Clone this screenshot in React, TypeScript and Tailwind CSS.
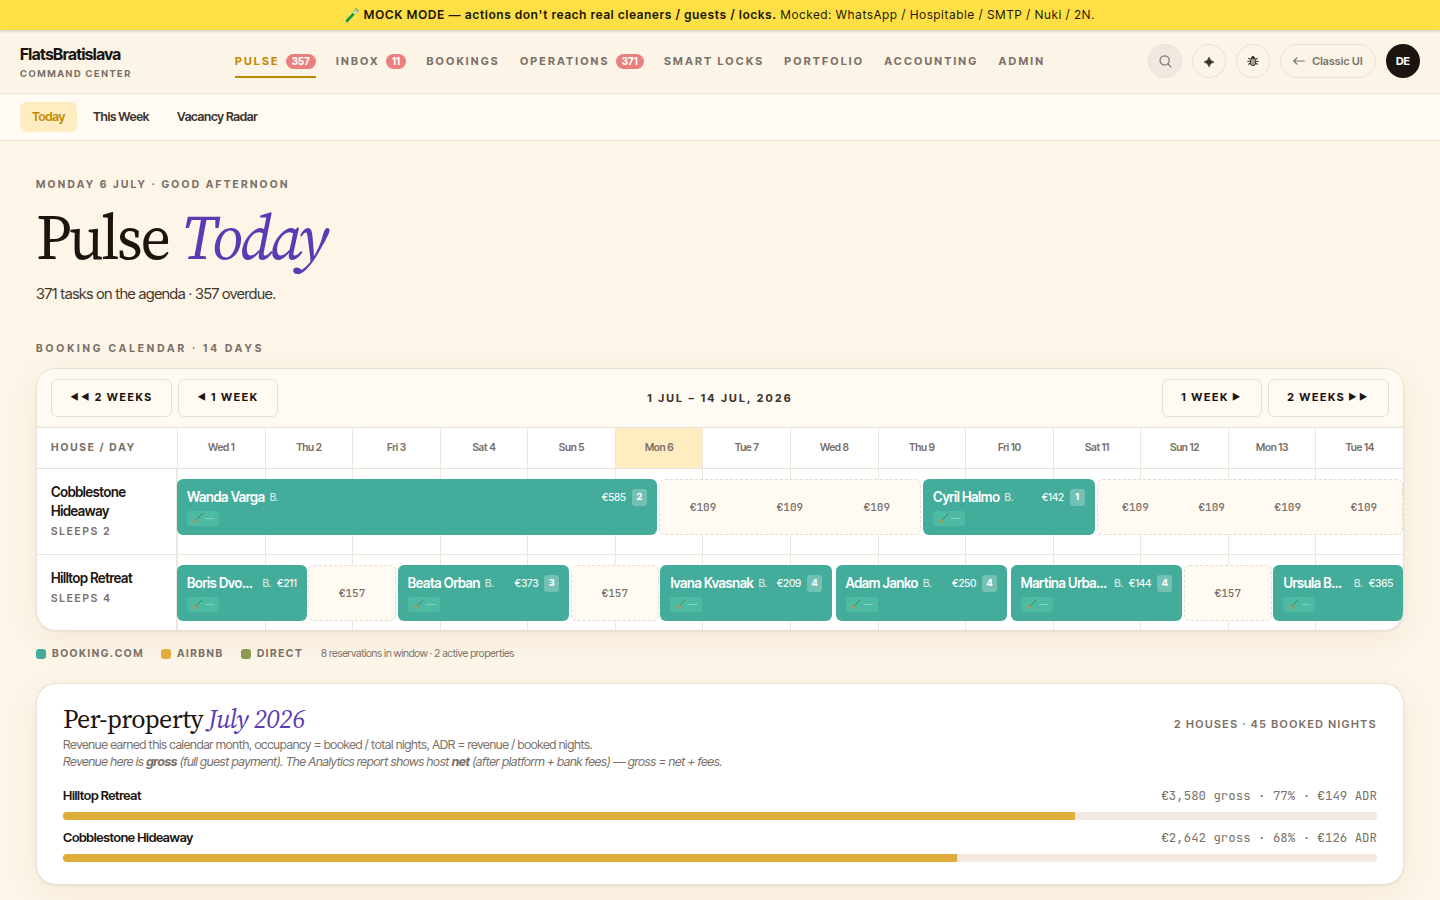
import React from 'react';
import clsx from 'clsx';

interface NavItem {
  label: string;
  count?: number;
  active?: boolean;
}

interface Booking {
  kind: 'booking';
  start: number;
  end: number;
  guest: string;
  price: string;
  guests?: number;
}

interface Gap {
  kind: 'gap';
  start: number;
  end: number;
  prices: string[];
}

interface House {
  name: string;
  sleeps: string;
  items: (Booking | Gap)[];
}

const NAV: NavItem[] = [
  { label: 'Pulse', count: 357, active: true },
  { label: 'Inbox', count: 11 },
  { label: 'Bookings' },
  { label: 'Operations', count: 371 },
  { label: 'Smart Locks' },
  { label: 'Portfolio' },
  { label: 'Accounting' },
  { label: 'Admin' },
];

const DAYS = ['Wed 1', 'Thu 2', 'Fri 3', 'Sat 4', 'Sun 5', 'Mon 6', 'Tue 7', 'Wed 8', 'Thu 9', 'Fri 10', 'Sat 11', 'Sun 12', 'Mon 13', 'Tue 14'];

// start / end are counted in half days from the left edge of the window
const HOUSES: House[] = [
  {
    name: 'Cobblestone Hideaway',
    sleeps: 'Sleeps 2',
    items: [
      { kind: 'booking', start: 0, end: 11, guest: 'Wanda Varga', price: '€585', guests: 2 },
      { kind: 'gap', start: 11, end: 17, prices: ['€109', '€109', '€109'] },
      { kind: 'booking', start: 17, end: 21, guest: 'Cyril Halmo', price: '€142', guests: 1 },
      { kind: 'gap', start: 21, end: 28, prices: ['€109', '€109', '€109', '€109'] },
    ],
  },
  {
    name: 'Hilltop Retreat',
    sleeps: 'Sleeps 4',
    items: [
      { kind: 'booking', start: 0, end: 3, guest: 'Boris Dvo…', price: '€211' },
      { kind: 'gap', start: 3, end: 5, prices: ['€157'] },
      { kind: 'booking', start: 5, end: 9, guest: 'Beata Orban', price: '€373', guests: 3 },
      { kind: 'gap', start: 9, end: 11, prices: ['€157'] },
      { kind: 'booking', start: 11, end: 15, guest: 'Ivana Kvasnak', price: '€209', guests: 4 },
      { kind: 'booking', start: 15, end: 19, guest: 'Adam Janko', price: '€250', guests: 4 },
      { kind: 'booking', start: 19, end: 23, guest: 'Martina Urba…', price: '€144', guests: 4 },
      { kind: 'gap', start: 23, end: 25, prices: ['€157'] },
      { kind: 'booking', start: 25, end: 28, guest: 'Ursula B…', price: '€365' },
    ],
  },
];

const REVENUE = [
  { name: 'Hilltop Retreat', stats: '€3,580 gross · 77% · €149 ADR', share: 77 },
  { name: 'Cobblestone Hideaway', stats: '€2,642 gross · 68% · €126 ADR', share: 68 },
];

const TubeIcon = () => (
  <svg width="15" height="16" viewBox="0 0 15 16" className="mr-1">
    <path d="M2 13.9L11.8 3.2" stroke="#86b58c" strokeWidth="3" strokeLinecap="round" />
    <path d="M2.1 13.8L8.4 7" stroke="#0f9a35" strokeWidth="2.4" strokeLinecap="round" />
    <path d="M8.6 6.8l2.8-3" stroke="#d9ecc9" strokeWidth="1.9" />
    <path d="M10.2 1.6l3.2 3" stroke="#9aa59c" strokeWidth="1.1" strokeLinecap="round" />
  </svg>
);

const BroomIcon = () => (
  <svg width="11" height="11" viewBox="0 0 11 11">
    <path d="M10.4.6L4.6 6.6" stroke="#4f7a5e" strokeWidth="0.9" strokeLinecap="round" />
    <path d="M4.2 5.6l1.6 1.6-1 2.2-2.6 1.2L.5 8.9l1.3-2.2z" fill="#93a566" />
    <path d="M3.6 6l1.7 1.7" stroke="#5c8a5c" strokeWidth="0.8" />
  </svg>
);

const SparkIcon = () => (
  <svg width="10" height="10" viewBox="0 0 10 10" className="mt-0.5" fill="#3d332b">
    <path d="M5 0Q5.9 4.1 10 5 5.9 5.9 5 10 4.1 5.9 0 5 4.1 4.1 5 0z" stroke="#3d332b" strokeWidth="0.6" />
  </svg>
);

const BugIcon = () => (
  <svg width="12" height="12" viewBox="0 0 12 12" fill="none" stroke="#3d332b" strokeWidth="1" strokeLinecap="round">
    <path d="M3.4 4H1.8V3.2M8.6 4h1.6V3.2M3.2 6.4H.7M8.8 6.4h2.5M3.4 8.6H1.8v.9M8.6 8.6h1.6v.9" />
    <rect x="3.5" y="2.8" width="5" height="7.8" rx="2.5" fill="#a89f96" />
    <path d="M4.5 2.9a1.5 1.5 0 0 1 3 0z" fill="#3d332b" />
  </svg>
);

const Header = () => (
  <header className="flex h-16 items-center border-b border-[#ece6da] bg-[#fcf4e6] px-5 pb-px">
    <div className="w-[215px] shrink-0 pt-0.5">
      <div className="text-[16px] leading-5 font-bold tracking-[-0.03em] text-[#1c140e]">FlatsBratislava</div>
      <div className="mt-1 text-[9.5px] leading-3 font-bold tracking-[0.17em] text-[#7a7068] uppercase">Command Center</div>
    </div>
    <nav className="flex gap-5">
      {NAV.map((item) => (
        <a
          key={item.label}
          className={clsx(
            'flex h-[34px] items-center gap-1.5 border-b-2 pt-[3px] text-[11px] font-bold tracking-[0.2em] whitespace-nowrap uppercase',
            item.active ? 'border-[#c08a00] text-[#c08a00]' : 'border-transparent text-[#7a7068]'
          )}
        >
          {item.label}
          {item.count && (
            <span className="flex h-[15px] items-center rounded-full bg-[#eb7f7d] px-[6.3px] text-[10px] font-bold tracking-normal text-white">
              {item.count}
            </span>
          )}
        </a>
      ))}
    </nav>
    <div className="ml-auto flex items-center gap-2.5 text-[#3d332b]">
      <button className="flex size-[34px] items-center justify-center rounded-full border border-[#e8e0d6] bg-[#f1e8e2]">
        <svg width="13" height="13" viewBox="0 0 13 13" fill="none" stroke="#7a7068" strokeWidth="1.2" strokeLinecap="round">
          <circle cx="5.6" cy="5.4" r="4.6" />
          <path d="M9 8.8l2.8 3" />
        </svg>
      </button>
      <button className="flex size-[34px] items-center justify-center rounded-full border border-[#e8e0d6]">
        <SparkIcon />
      </button>
      <button className="flex size-[34px] items-center justify-center rounded-full border border-[#e8e0d6]">
        <BugIcon />
      </button>
      <button className="flex h-[34px] w-24 items-center justify-center gap-[7px] rounded-full border border-[#e8e0d6] text-[11px] font-semibold tracking-[0.02em] text-[#7a7068]">
        <svg width="12" height="8" viewBox="0 0 12 8" fill="none" stroke="#7a7068" strokeWidth="1.2" strokeLinecap="round" strokeLinejoin="round">
          <path d="M11.3 4H.8M4 .8L.8 4 4 7.2" />
        </svg>
        <span>Classic UI</span>
      </button>
      <div className="flex size-[34px] items-center justify-center rounded-full bg-[#1c140e] text-[11px] font-bold tracking-normal text-white">DE</div>
    </div>
  </header>
);

const BookingBar: React.FC<{ item: Booking }> = ({ item }) => (
  <div
    className={clsx(
      'h-14 min-w-0 rounded-md bg-[#44ac9b] px-2.5 pt-2 text-white',
      item.start > 0 && 'ml-[1.75px]',
      item.end < 28 && 'mr-[1.75px]'
    )}
    style={{ gridColumn: `${item.start + 1} / ${item.end + 1}` }}
  >
    <div className="flex h-5 items-center whitespace-nowrap">
      <span className={clsx('text-[13.5px] font-semibold', item.guest.endsWith('…') && 'grow')}>{item.guest}</span>
      <span className="ml-[5px] pt-px text-[10.5px] font-medium text-white/75">B.</span>
      <span className="ml-auto pt-px pl-1.5 text-[10.5px] font-medium tracking-[-0.2px] text-white/95">{item.price}</span>
      {item.guests && (
        <span className="ml-1.5 flex h-[17px] w-[15px] shrink-0 items-center justify-center rounded-[3px] bg-white/25 text-[9.5px] font-bold tracking-normal">
          {item.guests}
        </span>
      )}
    </div>
    <div className="mt-1 flex h-[15px] w-8 items-center justify-center gap-0.5 rounded-[3px] bg-[#4dbaa3] text-[9.5px]">
      <BroomIcon />
      <span className="text-white/55">—</span>
    </div>
  </div>
);

const GapBar: React.FC<{ item: Gap }> = ({ item }) => (
  <div
    className="flex h-14 items-center justify-around rounded-md border border-dashed border-[#e6ddd2] bg-[#fffaf2] font-['JetBrains_Mono','DejaVu_Sans_Mono',monospace] text-[11px] font-medium tracking-normal text-[#7a7068]"
    style={{ gridColumn: `${item.start + 1} / ${item.end + 1}` }}
  >
    {item.prices.map((price, i) => (
      <span key={i}>{price}</span>
    ))}
  </div>
);

const StepButton: React.FC<{ children: React.ReactNode; wide?: boolean }> = ({ children, wide }) => (
  <button
    className={clsx(
      'flex h-[38px] items-center justify-center gap-[3px] rounded-md border border-[#e6e0d6] bg-[#fffaf2] pb-0.5 text-[11px] font-bold tracking-[0.15em] whitespace-nowrap text-[#1c140e] uppercase',
      wide ? 'w-[121px]' : 'w-[100px]'
    )}
  >
    {children}
  </button>
);

const Arrows: React.FC<{ children: string }> = ({ children }) => <span className="text-[9px] tracking-[2.4px]">{children}</span>;

const Calendar = () => (
  <div className="overflow-hidden rounded-[20px] border border-[#e6e0d6] bg-white shadow-[0_1px_2px_rgba(60,40,10,0.06),0_8px_32px_rgba(60,40,10,0.06)]">
    <div className="flex h-[59px] items-center justify-between border-b border-[#e6e0d6] bg-[#fffaf2] px-3.5">
      <div className="flex gap-1.5">
        <StepButton wide>
          <Arrows>◀◀</Arrows> 2 weeks
        </StepButton>
        <StepButton>
          <Arrows>◀</Arrows> 1 week
        </StepButton>
      </div>
      <div className="text-[11px] font-bold tracking-[0.2em] text-[#3d332b] uppercase">1 Jul – 14 Jul, 2026</div>
      <div className="flex gap-1.5">
        <StepButton>
          1 week <Arrows>▶</Arrows>
        </StepButton>
        <StepButton wide>
          2 weeks <Arrows>▶▶</Arrows>
        </StepButton>
      </div>
    </div>
    <div className="flex h-[41px] border-b border-[#e8e0d6]">
      <div className="flex w-[140px] shrink-0 items-center pl-3.5 text-[10.5px] font-bold tracking-[0.18em] text-[#7a7068] uppercase">House / Day</div>
      <div className="grid grow grid-cols-14">
        {DAYS.map((day) => (
          <div
            key={day}
            className={clsx(
              'flex items-center justify-center border-l border-[#efe7de] text-[10.5px] font-semibold text-[#7a7068]',
              day === 'Mon 6' && 'bg-[#ffecc0]'
            )}
          >
            {day}
          </div>
        ))}
      </div>
    </div>
    {HOUSES.map((house, i) => (
      <div key={house.name} className={clsx('flex', i === 0 ? 'h-[86px] border-b border-[#efe7de]' : 'h-[75px]')}>
        <div className="w-[140px] shrink-0 border-r border-[#efe7de] pt-3.5 pr-6 pl-3.5">
          <div className="text-[13.5px] leading-[1.41] font-semibold text-[#1c140e]">{house.name}</div>
          <div className="mt-0.5 text-[10.5px] leading-[18px] font-semibold tracking-[0.18em] text-[#7a7068] uppercase">{house.sleeps}</div>
        </div>
        <div className="grid grow">
          <div className="col-start-1 row-start-1 grid grid-cols-14">
            {DAYS.map((day) => (
              <div key={day} className="border-l border-[#efe7de]" />
            ))}
          </div>
          <div className="z-10 col-start-1 row-start-1 grid grid-cols-28 pt-2.5">
            {house.items.map((item) =>
              item.kind === 'booking' ? <BookingBar key={item.start} item={item} /> : <GapBar key={item.start} item={item} />
            )}
          </div>
        </div>
      </div>
    ))}
  </div>
);

const Legend = () => (
  <div className="mt-3.5 flex h-[18px] items-center text-[10.5px] font-bold tracking-[0.15em] text-[#7a7068] uppercase">
    <span className="mr-1.5 size-2.5 rounded-[3px] bg-[#44ac9b]" />
    <span className="w-[109px]">Booking.com</span>
    <span className="mr-1.5 size-2.5 rounded-[3px] bg-[#e0ad3b]" />
    <span className="w-16">Airbnb</span>
    <span className="mr-1.5 size-2.5 rounded-[3px] bg-[#8a9a50]" />
    <span className="w-16">Direct</span>
    <span className="text-[10.5px] font-normal tracking-[-0.02em] normal-case">8 reservations in window · 2 active properties</span>
  </div>
);

const PropertyCard = () => (
  <section className="mt-5 h-[202px] rounded-[20px] border border-[#e6e0d6] bg-white px-[26px] pt-[18px] shadow-[0_1px_2px_rgba(60,40,10,0.06),0_8px_32px_rgba(60,40,10,0.06)]">
    <div className="flex justify-between">
      <div>
        <h2 className="font-['Source_Serif_4','Liberation_Serif',serif] text-[26px] leading-[34px] tracking-[-0.026em] text-[#1c140e]">
          Per-property <em className="tracking-[-0.02em] text-[#5b3ab4]">July 2026</em>
        </h2>
        <p className="text-[12.5px] leading-[17px] text-[#7a7068]">
          Revenue earned this calendar month, occupancy = booked / total nights, ADR = revenue / booked nights.
        </p>
        <p className="text-[12.5px] leading-[17px] text-[#7a7068] italic">
          Revenue here is <b>gross</b> (full guest payment). The Analytics report shows host <b>net</b> (after platform + bank fees) — gross = net + fees.
        </p>
      </div>
      <div className="pt-3.5 text-[11px] leading-4 font-semibold tracking-[0.14em] text-[#7a7068] uppercase">2 houses · 45 booked nights</div>
    </div>
    <div className="mt-[17px] flex flex-col gap-[9px]">
      {REVENUE.map((row) => (
        <div key={row.name}>
          <div className="flex h-[18px] items-center justify-between">
            <span className="text-[13px] font-semibold text-[#1c140e]">{row.name}</span>
            <span className="font-['JetBrains_Mono','DejaVu_Sans_Mono',monospace] text-[12.4px] tracking-normal text-[#7a7068]">{row.stats}</span>
          </div>
          <div className="mt-[7px] h-2 overflow-hidden rounded bg-[#f1e8e2]">
            <div className="h-full bg-[#e0ad3b]" style={{ width: `${row.share}%` }} />
          </div>
        </div>
      ))}
    </div>
  </section>
);

const App: React.FC = () => (
  <div className="h-[900px] overflow-hidden bg-[#fdf5e7] font-['Inter_Tight',Inter,sans-serif] tracking-[-0.3px]">
    <div className="relative z-10 flex h-[30px] items-center justify-center bg-[#fee046] text-xs tracking-[0.98px] text-[#1a1400] shadow-[0_1px_3px_rgba(0,0,0,0.2)]">
      <TubeIcon />
      <span className="whitespace-pre">
        <b className="font-semibold">MOCK MODE — actions don't reach real cleaners / guests / locks.</b> Mocked: WhatsApp / Hospitable / SMTP / Nuki / 2N.
      </span>
    </div>
    <Header />
    <div className="flex h-[47px] items-center gap-1 border-b border-[#e8e2d8] bg-[#fffaf2] px-5 text-[12.5px] leading-4 font-semibold text-[#3d332b]">
      <span className="rounded-md bg-[#ffecc0] px-3 py-[7px] text-[#c08a00]">Today</span>
      <span className="px-3">This Week</span>
      <span className="px-3">Vacancy Radar</span>
    </div>
    <main className="px-9 pt-9">
      <div className="text-[10.5px] leading-4 font-bold tracking-[0.22em] text-[#7a7068] uppercase">Monday 6 July · Good afternoon</div>
      <h1 className="mt-2 flex font-['Source_Serif_4','Liberation_Serif',serif] text-[64px] leading-[72px] tracking-[-0.04em] text-[#1c140e]">
        <span className="w-[146px] origin-left scale-x-[0.936]">Pulse</span>
        <em className="origin-left scale-x-[0.973] text-[#5b3ab4]">Today</em>
      </h1>
      <p className="mt-[9px] text-[15px] leading-6 text-[#3d332b]">371 tasks on the agenda · 357 overdue.</p>
      <div className="mt-[35px] mb-[11px] text-[10.5px] leading-4 font-bold tracking-[0.28em] text-[#7a7068] uppercase">Booking calendar · 14 days</div>
      <Calendar />
      <Legend />
      <PropertyCard />
    </main>
  </div>
);

export default App;
